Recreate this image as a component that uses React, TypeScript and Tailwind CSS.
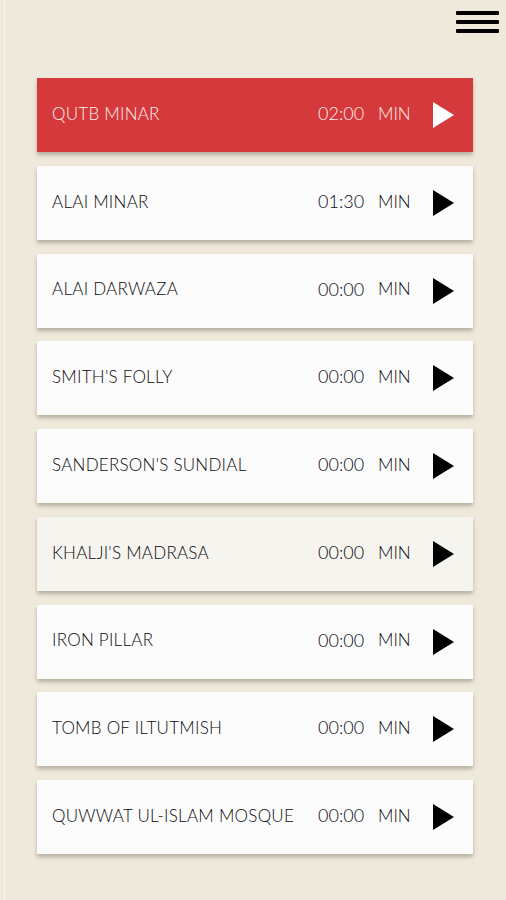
import React from "react";

const items = [
  { name: "QUTB MINAR", time: "02:00", active: true },
  { name: "ALAI MINAR", time: "01:30" },
  { name: "ALAI DARWAZA", time: "00:00" },
  { name: "SMITH'S FOLLY", time: "00:00" },
  { name: "SANDERSON'S SUNDIAL", time: "00:00" },
  { name: "KHALJI'S MADRASA", time: "00:00", dim: true },
  { name: "IRON PILLAR", time: "00:00" },
  { name: "TOMB OF ILTUTMISH", time: "00:00" },
  { name: "QUWWAT UL-ISLAM MOSQUE", time: "00:00" },
];

function Play({ color }: { color: string }) {
  return (
    <svg width="21" height="26" viewBox="0 0 21 26" className="block">
      <polygon points="0,0 21,13 0,26" fill={color} />
    </svg>
  );
}

export default function App() {
  return (
    <div
      className="w-[506px] h-[900px] bg-[#efe9dc] flex overflow-hidden"
      style={{ fontFamily: "Lato, 'Open Sans', sans-serif" }}
    >
      <div className="w-[4px] shrink-0" />
      <div className="w-[1px] shrink-0 bg-[#f8f5ee]" />
      <div className="flex-1 flex flex-col">
        <div className="h-[78px] flex justify-end items-start pt-[11px] pr-[7px]">
          <div className="flex flex-col gap-[5px]">
            <div className="w-[43px] h-[4px] bg-black rounded-[1px]" />
            <div className="w-[43px] h-[4px] bg-black rounded-[1px]" />
            <div className="w-[43px] h-[4px] bg-black rounded-[1px]" />
          </div>
        </div>
        <div className="flex flex-col gap-[13.75px] pl-[32px] pr-[33px]">
          {items.map((it) => (
            <div
              key={it.name}
              className={
                "h-[74px] flex items-center pl-[15px] pr-[19px] shadow-[0_3px_4px_rgba(80,70,50,0.35)] " +
                (it.active
                  ? "bg-[#d5393b] text-[#fdf0f0]"
                  : it.dim
                  ? "bg-[#f6f4ef] text-[#0a0a0a]"
                  : "bg-[#fcfcfd] text-[#0a0a0a]")
              }
            >
              <span className="text-[17px] font-light tracking-[0.25px] flex-1 whitespace-nowrap mb-[3px]">
                {it.name}
              </span>
              <span className="text-[18px] font-light w-[47px] whitespace-nowrap mb-[3px]">
                {it.time}
              </span>
              <span className="text-[17px] font-light ml-[13px] w-[32px] whitespace-nowrap mb-[3px]">
                MIN
              </span>
              <span className="ml-[23px]">
                <Play color={it.active ? "#ffffff" : "#000000"} />
              </span>
            </div>
          ))}
        </div>
      </div>
    </div>
  );
}
